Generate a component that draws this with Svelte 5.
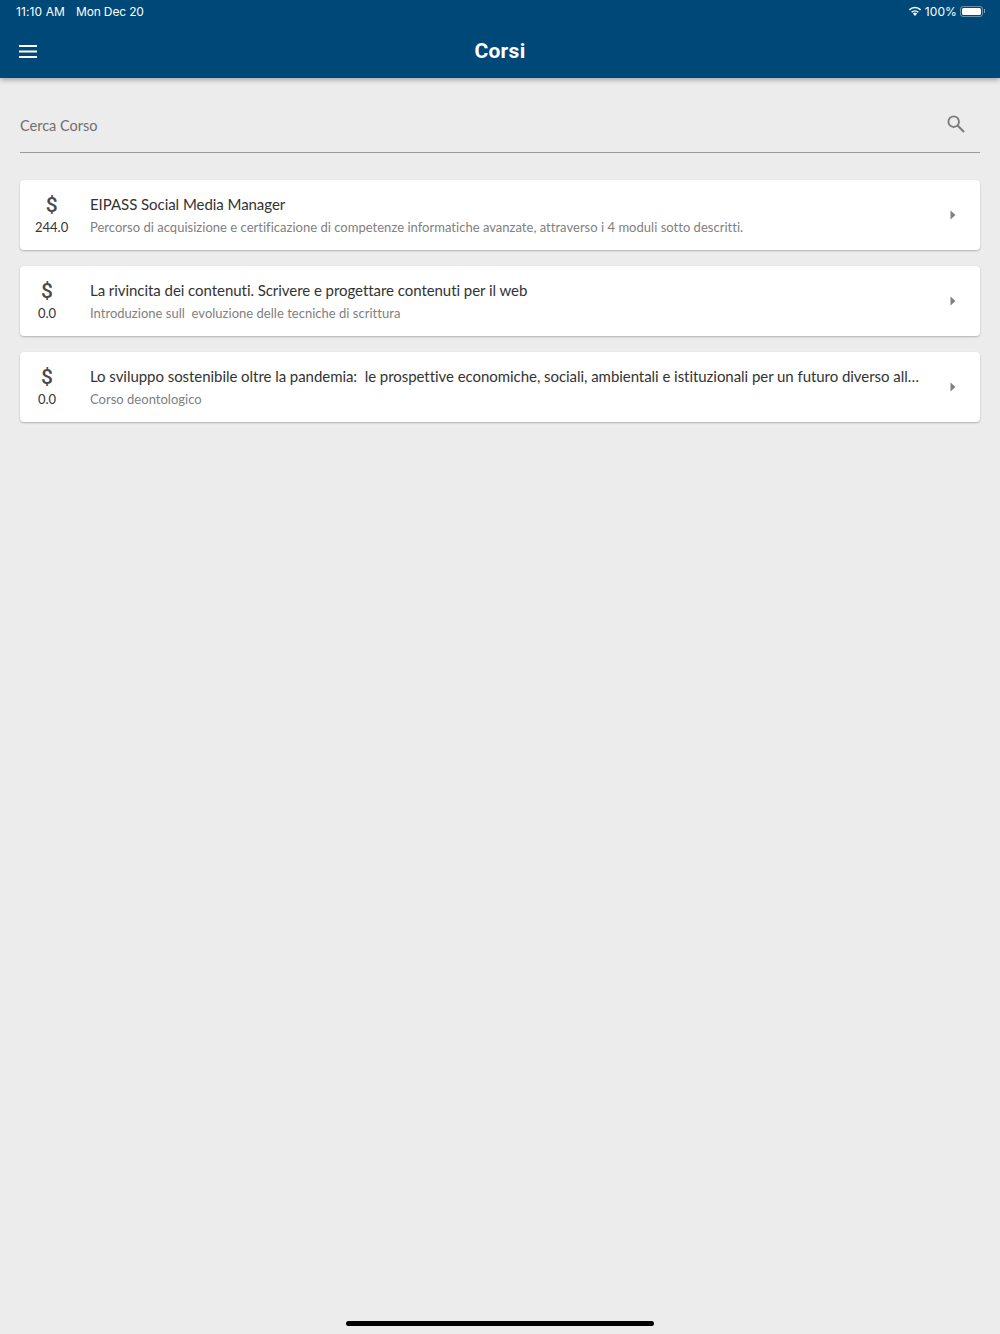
<script>
	const courses = [
		{
			price: '244.0',
			title: 'EIPASS Social Media Manager',
			description:
				'Percorso di acquisizione e certificazione di competenze informatiche avanzate, attraverso i 4 moduli sotto descritti.'
		},
		{
			price: '0.0',
			title: 'La rivincita dei contenuti. Scrivere e progettare contenuti per il web',
			description: 'Introduzione sull\u00a0 evoluzione delle tecniche di scrittura'
		},
		{
			price: '0.0',
			title:
				'Lo sviluppo sostenibile oltre la pandemia:\u00a0 le prospettive economiche, sociali, ambientali e istituzionali per un futuro diverso all\u2026',
			description: 'Corso deontologico'
		}
	];
</script>

<div class="page">
	<header class="header">
		<div class="status-bar">
			<div class="status-left">
				<span>11:10 AM</span>
				<span class="date">Mon Dec 20</span>
			</div>
			<div class="status-right">
				<svg class="wifi" width="14" height="10" viewBox="0 0 14 10" aria-hidden="true">
					<path d="M7 10 L4.9 7.6 A3 3 0 0 1 9.1 7.6 Z" fill="#fff" />
					<path d="M3.6 6.3 A4.9 4.9 0 0 1 10.4 6.3" fill="none" stroke="#fff" stroke-width="1.5" />
					<path d="M1.4 3.9 A8 8 0 0 1 12.6 3.9" fill="none" stroke="#fff" stroke-width="1.5" />
				</svg>
				<span>100%</span>
				<div class="battery"><div class="battery-level"></div></div>
				<div class="battery-cap"></div>
			</div>
		</div>
		<div class="toolbar">
			<button class="menu-button" aria-label="Menu">
				<svg width="18" height="13" viewBox="0 0 18 13" aria-hidden="true">
					<path d="M0 1h18M0 6.5h18M0 12h18" stroke="#fff" stroke-width="2" />
				</svg>
			</button>
			<h1 class="title">Corsi</h1>
		</div>
	</header>

	<main class="content">
		<div class="search">
			<span class="search-label">Cerca Corso</span>
			<svg class="search-icon" width="18" height="18" viewBox="0 0 18 18" aria-hidden="true">
				<circle cx="6.7" cy="6.7" r="5.3" fill="none" stroke="#7d7d7d" stroke-width="1.9" />
				<path d="M10.6 10.6 L17 17" stroke="#7d7d7d" stroke-width="2.1" />
			</svg>
		</div>

		<ul class="list">
			{#each courses as course}
				<li class="card">
					<div class="price-col">
						<div class="price">
							<span class="dollar">$</span>
							<span class="amount">{course.price}</span>
						</div>
					</div>
					<div class="text">
						<div class="course-title">{course.title}</div>
						<div class="course-desc">{course.description}</div>
					</div>
					<svg class="chevron" width="6" height="10" viewBox="0 0 6 10" aria-hidden="true">
						<path d="M0.5 0.5 L5.5 5 L0.5 9.5 Z" fill="#808080" />
					</svg>
				</li>
			{/each}
		</ul>
	</main>

	<div class="home-indicator"></div>
</div>

<style>
	:global(body) {
		background: #ececec;
	}

	.page {
		height: 1334px;
		display: flex;
		flex-direction: column;
		background: #ececec;
		font-family: Lato, sans-serif;
		overflow: hidden;
	}

	.header {
		background: #004878;
		color: #fff;
		box-shadow: 0 2px 5px rgba(0, 0, 0, 0.3);
		z-index: 1;
	}

	.status-bar {
		height: 24px;
		display: flex;
		align-items: center;
		justify-content: space-between;
		padding: 0 15px 2px 16px;
		box-sizing: border-box;
		font-family: Inter, sans-serif;
		font-size: 12px;
		letter-spacing: 0.1px;
	}

	.status-left {
		display: flex;
		gap: 11px;
	}

	.date {
		letter-spacing: -0.15px;
	}

	.status-right {
		display: flex;
		align-items: center;
	}

	.wifi {
		margin-right: 3px;
	}

	.battery {
		width: 23px;
		height: 11px;
		margin-left: 3px;
		padding: 1px;
		box-sizing: border-box;
		border: 1px solid rgba(255, 255, 255, 0.4);
		border-radius: 3px;
	}

	.battery-level {
		height: 100%;
		background: #fff;
		border-radius: 1.5px;
	}

	.battery-cap {
		width: 1px;
		height: 4px;
		margin-left: 1px;
		background: rgba(255, 255, 255, 0.5);
	}

	.toolbar {
		height: 54px;
		position: relative;
		display: flex;
		align-items: center;
		justify-content: center;
	}

	.menu-button {
		position: absolute;
		left: 19px;
		top: 21px;
		padding: 0;
		border: none;
		background: none;
		line-height: 0;
	}

	.title {
		margin: 0;
		font-family: Roboto, sans-serif;
		font-size: 21px;
		font-weight: 700;
		letter-spacing: 0.3px;
	}

	.content {
		flex: 1;
		padding: 20px 20px 0;
	}

	.search {
		height: 54px;
		display: flex;
		align-items: center;
		justify-content: space-between;
		padding-right: 15px;
		border-bottom: 1px solid #999;
	}

	.search-label {
		font-size: 14.5px;
		line-height: 20px;
		margin-top: 1px;
		color: #6f6f6f;
	}

	.search-icon {
		margin-top: -2px;
	}

	.list {
		list-style: none;
		margin: 27px 0 0;
		padding: 0;
		display: flex;
		flex-direction: column;
		gap: 16px;
	}

	.card {
		height: 70px;
		display: flex;
		align-items: center;
		background: #fff;
		border-radius: 4px;
		box-shadow: 0 1px 2px rgba(0, 0, 0, 0.25);
		padding: 0 24px 0 15px;
	}

	.price-col {
		width: 55px;
		flex-shrink: 0;
	}

	.price {
		display: inline-flex;
		flex-direction: column;
		align-items: center;
		min-width: 24px;
		color: #333;
	}

	.dollar {
		font-family: Roboto, sans-serif;
		font-size: 21px;
		line-height: 24px;
		font-weight: 500;
		color: #4a4a4a;
	}

	.amount {
		font-size: 13px;
		line-height: 20px;
	}

	.text {
		flex: 1;
		min-width: 0;
	}

	.course-title,
	.course-desc {
		white-space: nowrap;
	}

	.course-title {
		font-size: 15px;
		line-height: 22px;
		letter-spacing: -0.05px;
		color: #333;
	}

	.course-desc {
		margin-top: 2px;
		font-size: 13px;
		line-height: 20px;
		letter-spacing: 0.02px;
		color: #808080;
	}

	.chevron {
		flex-shrink: 0;
	}

	.home-indicator {
		position: absolute;
		left: 346px;
		top: 1321px;
		width: 308px;
		height: 5px;
		border-radius: 3px;
		background: #000;
	}
</style>
